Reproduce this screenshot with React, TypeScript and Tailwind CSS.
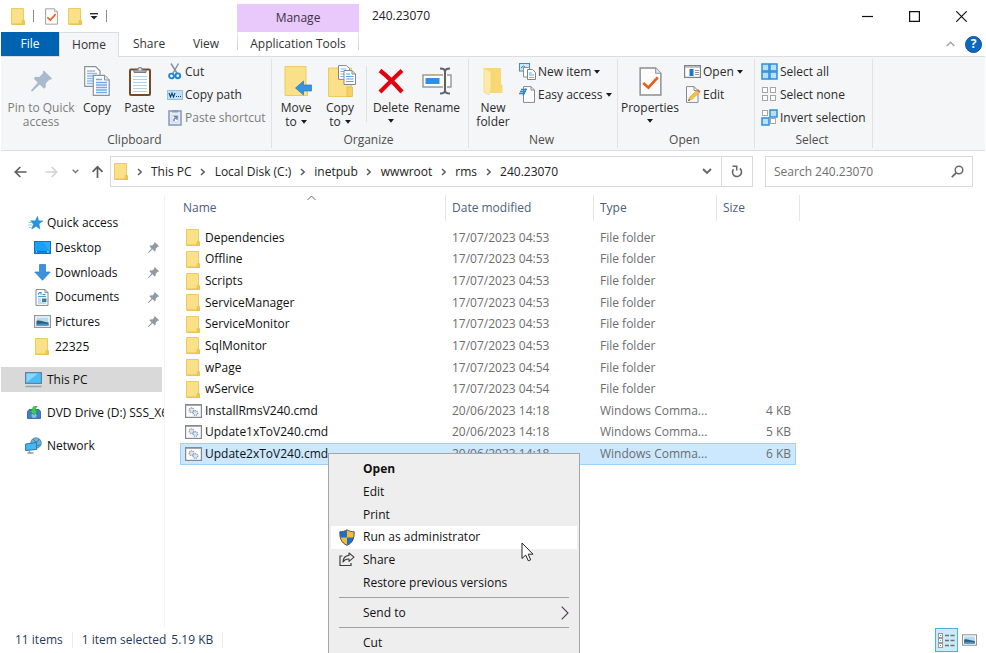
import React from "react";

type IconProps = { className?: string };

/* ---------- icons ---------- */

function FolderIcon({ className = "h-[17px] w-[14px]" }: IconProps) {
  return (
    <svg viewBox="0 0 14 17" className={`shrink-0 ${className}`} aria-hidden="true">
      <path d="M.5.5h12v12.3l1 .7v3H.5z" fill="#fbe08a" stroke="#eccb62" />
      <path d="M1 16h12.6" stroke="#e7bf4e" />
      <path d="M11 12.5h2.5v4H11z" fill="#f0c94f" stroke="#e6bd49" strokeWidth=".6" />
    </svg>
  );
}

function CheckPageIcon({ className = "h-[17px] w-[13px]" }: IconProps) {
  return (
    <svg viewBox="0 0 22 28" className={`shrink-0 ${className}`} aria-hidden="true">
      <path d="M1 1h15l5 5v21H1z" fill="#fcfcfd" stroke="#8d8f93" strokeWidth="1.4" />
      <path d="M16 1v5h5" fill="#e4e6ea" stroke="#8d8f93" />
      <path d="M4 15.5l5 4.5 9-10" fill="none" stroke="#ee5a1c" strokeWidth="2.6" />
    </svg>
  );
}

function PinShape({ className = "h-5 w-5 text-[#a9b9ce]" }: IconProps) {
  return (
    <svg viewBox="0 0 20 20" className={`shrink-0 ${className}`} aria-hidden="true">
      <path
        d="M12.2 0L20 7.6l-1.2 1.2-1.2-.2-3.6 3.8.1 3.4-1.8 1.6-4-4L1.2 20 0 19.6.3 18.6 6.400 11.600 2.600 7.700l1.700-1.700 3.500.2L11.500 2.600l-.400-1.300z"
        fill="currentColor"
      />
    </svg>
  );
}

function CopyIcon() {
  return (
    <svg viewBox="0 0 26 30" className="h-[30px] w-[26px]" aria-hidden="true">
      <path d="M.7.700h11l4.300 4.300v15.300H.7z" fill="#fff" stroke="#8b9098" strokeWidth="1.200" />
      <path d="M3 5h8M3 7.500h10M3 10h10M3 12.500h10M3 15h10M3 17.500h10" stroke="#8ebdf0" strokeWidth="1.300" />
      <path d="M9.300 9.300h11.200l4.700 4.700v15.300H9.300z" fill="#fff" stroke="#8b9098" strokeWidth="1.200" />
      <path d="M20.500 9.300V14h4.700" fill="#dfe5ee" stroke="#8b9098" />
      <path d="M12 13.500h6M12 16.500h11M12 19h11M12 21.500h11M12 24h11M12 26.500h11" stroke="#6eaaf0" strokeWidth="1.400" />
    </svg>
  );
}

function PasteIcon() {
  return (
    <svg viewBox="0 0 22 30" className="h-[30px] w-[22px]" aria-hidden="true">
      <rect x="1" y="3.500" width="20" height="25.500" rx="1" fill="#fff" stroke="#74492a" strokeWidth="2" />
      <path d="M4 10.500h14M4 13.500h14M4 16.500h14M4 19.500h14M4 22.500h14M4 25.500h14" stroke="#a9d3ee" strokeWidth="1.200" />
      <path d="M5 6.500V4h3.500a2.500 2.500 0 015 0H17v2.500z" fill="#a3a9b0" stroke="#777c83" />
      <circle cx="11" cy="3.200" r="1" fill="#f5f6f7" />
    </svg>
  );
}

function ScissorsIcon() {
  return (
    <svg viewBox="0 0 14 17" className="h-[17px] w-[14px]" aria-hidden="true">
      <path d="M3 .5L9.500 11M10.500.5L4.500 11" stroke="#8793a0" strokeWidth="1.500" />
      <circle cx="3.500" cy="13" r="2.400" fill="none" stroke="#1d86cc" strokeWidth="1.900" />
      <circle cx="9.800" cy="12.800" r="2.400" fill="none" stroke="#1d86cc" strokeWidth="1.900" />
    </svg>
  );
}

function CopyPathIcon() {
  return (
    <svg viewBox="0 0 16 10" className="h-[10px] w-4" aria-hidden="true">
      <rect x=".5" y=".5" width="15" height="9" fill="#bfe2f8" stroke="#8cc3e6" />
      <path d="M2 3l1.500 4L5 3l1.500 4L8 3" fill="none" stroke="#1b3f63" strokeWidth="1.100" />
      <path d="M9 6.500h1M11 6.500h1M13 6.500h1" stroke="#1b3f63" strokeWidth="1.200" />
    </svg>
  );
}

function PasteShortcutIcon() {
  return (
    <svg viewBox="0 0 14 17" className="h-[17px] w-[14px]" aria-hidden="true">
      <rect x="1" y="2" width="12" height="14" fill="#e5ebf5" stroke="#8b9dbd" strokeWidth="1.600" />
      <path d="M4 1h6v2.500H4z" fill="#8b9dbd" />
      <path d="M4 6.500h6v6.500H4z" fill="#fff" stroke="#b9c5da" strokeWidth=".7" />
      <path d="M5.500 12V10L8 8H6V7h3.500v3.500h-1V9L6.500 10.500V12z" fill="#6480b0" stroke="#6480b0" strokeWidth=".5" />
    </svg>
  );
}

function MoveToIcon() {
  return (
    <svg viewBox="0 0 28 30" className="ml-1 h-[30px] w-7" aria-hidden="true">
      <path d="M1 .5h21v21l1.500 1.500v6.500H1z" fill="#fbe08a" stroke="#edcb62" />
      <path d="M11.500 22l8-7v4h8v6h-8v4z" fill="#3793e0" stroke="#2678bd" strokeWidth=".7" />
    </svg>
  );
}

function CopyToIcon() {
  return (
    <svg viewBox="0 0 28 32" className="ml-1 h-8 w-7" aria-hidden="true">
      <path d="M.5 3h23v28.500H.5z" fill="#fbe08a" stroke="#edcb62" />
      <path d="M19 22h5.500v9.500H19z" fill="#f6d263" stroke="#e0b84a" strokeWidth=".7" />
      <path d="M10.500.6h8l3 3v10.800h-11z" fill="#fff" stroke="#7f8894" />
      <path d="M12.500 4h6M12.500 6.500h7M12.500 9h7M12.500 11.500h7" stroke="#7db2ee" />
      <path d="M16 5.500h8l3.500 3.500v10.500H16z" fill="#fff" stroke="#7f8894" />
      <path d="M24 5.500V9h3.500" fill="none" stroke="#7f8894" />
      <path d="M18 9h4M18 11.500h7.500M18 14h7.500M18 16.500h7.500" stroke="#5f9fec" strokeWidth="1.200" />
    </svg>
  );
}

function DeleteIcon() {
  return (
    <svg viewBox="0 0 26 26" className="h-[26px] w-[26px]" aria-hidden="true">
      <path d="M2 2.500C9 8 17 16 24 24M24 2.500C17 9 9 17 2 24" stroke="#e3000f" strokeWidth="4.200" fill="none" />
    </svg>
  );
}

function RenameIcon() {
  return (
    <svg viewBox="0 0 30 28" className="h-7 w-[30px]" aria-hidden="true">
      <rect x="1" y="8" width="28" height="12" fill="#fff" stroke="#8a8d90" strokeWidth="1.300" />
      <rect x="3.500" y="11" width="14" height="6" fill="#2f8fe4" />
      <path d="M23 3v22" stroke="#f5f6f7" strokeWidth="4" />
      <path d="M18 1.500c2.500 0 5 .5 5 3v19c0 2.500-2.500 3-5 3M28 1.500c-2.500 0-5 .5-5 3M28 26.500c-2.500 0-5-.5-5-3" stroke="#5f6266" strokeWidth="2" fill="none" />
    </svg>
  );
}

function NewFolderIcon() {
  return (
    <svg viewBox="0 0 20 29" className="h-[29px] w-5" aria-hidden="true">
      <path d="M1 1h17v16l1.500 1.500V26H1z" fill="#f8d775" />
      <path d="M1 1l7 4v17l-2 6-5-3z" fill="#fdeaa9" stroke="#f3d277" strokeWidth=".6" />
    </svg>
  );
}

function NewItemIcon() {
  return (
    <svg viewBox="0 0 17 17" className="h-[17px] w-[17px]" aria-hidden="true">
      <rect x=".5" y=".5" width="10" height="7.500" fill="#cfe8f9" stroke="#3a8cc4" />
      <path d="M2 5l2.500-2L7 5" stroke="#2673a8" fill="none" />
      <path d="M4.500 4.500h5l2.500 2.500v7H4.500z" fill="#fff" stroke="#8a9098" />
      <path d="M8.500 6.500h5l3 3v7h-8z" fill="#fff" stroke="#7c828a" />
      <path d="M10 10h3M10 12h5" stroke="#66a8e6" />
      <path d="M10 14.500h5" stroke="#e29a6d" />
    </svg>
  );
}

function EasyAccessIcon() {
  return (
    <svg viewBox="0 0 17 17" className="h-[17px] w-[17px]" aria-hidden="true">
      <path d="M4.500.6h7.500l3.500 3.500v12.300h-11z" fill="#fff" stroke="#858a91" />
      <path d="M12 .6v3.500h3.500" fill="none" stroke="#858a91" />
      <path d="M2 3.500h6M1 5.500h6M0 7.500h6" stroke="#2f88cc" strokeWidth="1.300" />
      <path d="M4 9.500l3-7" stroke="#2f88cc" strokeWidth="1.300" />
    </svg>
  );
}

function OpenIcon() {
  return (
    <svg viewBox="0 0 17 13" className="h-[13px] w-[17px]" aria-hidden="true">
      <rect x=".6" y=".6" width="15.800" height="11.800" fill="#fff" stroke="#7c8085" strokeWidth="1.200" />
      <path d="M1 2h15" stroke="#9fa4aa" strokeWidth="1.300" />
      <rect x="5.500" y="4" width="4" height="7" fill="#1e74d2" />
      <path d="M11 5.500h4M11 7.500h4M11 9.500h4" stroke="#8f959c" />
    </svg>
  );
}

function EditIcon() {
  return (
    <svg viewBox="0 0 16 17" className="h-[17px] w-4" aria-hidden="true">
      <path d="M1.500.6h7.500l4 4v11.800H1.500z" fill="#fdfdfd" stroke="#85898f" />
      <path d="M9 .6v4h4" fill="none" stroke="#85898f" />
      <path d="M3.500 14.500l1-3.200 7.500-7 2.400 2.400-7.700 6.700z" fill="#f5c242" stroke="#cf9b33" strokeWidth=".6" />
      <path d="M12 4.300l1.200-1.100 2.300 2.300-1.100 1.200z" fill="#d9636d" />
      <path d="M3.200 15l.7-2 1.300 1.300z" fill="#444" />
    </svg>
  );
}

function SelectGrid({ filled }: { filled: boolean[] }) {
  const spots = [
    [1, 1],
    [9, 1],
    [1, 9],
    [9, 9],
  ];
  return (
    <svg viewBox="0 0 17 17" className="h-[17px] w-[17px]" aria-hidden="true">
      {spots.map(([x, y], i) =>
        filled[i] ? (
          <rect key={i} x={x} y={y} width="7" height="7" fill="#b9e0fb" stroke="#2c8fdd" strokeWidth="1.500" />
        ) : (
          <rect key={i} x={x + 0.5} y={y + 0.5} width="5" height="5" fill="#fff" stroke="#a6a6a6" />
        )
      )}
    </svg>
  );
}

function StarIcon() {
  return (
    <svg viewBox="0 0 15 14" className="h-[14px] w-[15px]" aria-hidden="true">
      <path d="M9.500 .3l1 4.400 4.300.3-3.800 2.700.8 5.300-3.600-2.700-4.400 2.800 1.600-4.900L3 5l4.300-.2z" fill="#2a94dc" stroke="#1c7fc4" strokeWidth=".5" />
      <path d="M2 4.500h3M.5 6.500h3.500M0 9h4M1 11.500h2.500" stroke="#7cc0ec" strokeWidth=".8" />
    </svg>
  );
}

function DesktopIcon() {
  return (
    <svg viewBox="0 0 17 13" className="h-[13px] w-[17px]" aria-hidden="true">
      <rect x=".5" y=".5" width="16" height="12" fill="#18a0f5" stroke="#1372bd" />
      <path d="M1 10.800h15" stroke="#0e5e9c" />
      <path d="M2 10.800h1M13 10.800h2" stroke="#d5ecfa" />
      <path d="M16 1v9L9 1z" fill="#2aabfb" />
    </svg>
  );
}

function DownloadsIcon() {
  return (
    <svg viewBox="0 0 17 17" className="h-[17px] w-[17px]" aria-hidden="true">
      <path d="M5.500.5h6V8h4.700L8.500 16.300.8 8h4.700z" fill="#3d92df" stroke="#2b78c0" strokeWidth=".7" />
    </svg>
  );
}

function DocumentsIcon() {
  return (
    <svg viewBox="0 0 14 17" className="h-[17px] w-[14px]" aria-hidden="true">
      <path d="M1 .6h9l3 3v12.800H1z" fill="#fff" stroke="#858a90" />
      <path d="M10 .6v3h3" fill="none" stroke="#858a90" />
      <path d="M3 5.500l1.500-2h1.500v2M7.500 5.500h3" fill="none" stroke="#2f93dd" strokeWidth="1.200" />
      <path d="M3 7.500h8" stroke="#3fa6e6" strokeWidth="1.200" />
      <path d="M3 10h3M3 12h3M3 14h8" stroke="#7fb6dc" />
      <path d="M7 9.500h4.500V13H7z" fill="#3c7f9c" />
    </svg>
  );
}

function PictureIcon({ className = "h-[13px] w-[17px]" }: IconProps) {
  return (
    <svg viewBox="0 0 17 13" className={`shrink-0 ${className}`} aria-hidden="true">
      <rect x=".6" y=".6" width="15.800" height="11.800" fill="#fff" stroke="#92969a" strokeWidth="1.200" />
      <path d="M2.500 2.500h12v8h-12z" fill="#b3dbf4" />
      <path d="M2.500 6c3-1.500 6 1 12 1.500v3h-12z" fill="#2d5f7d" />
      <path d="M2.500 9c4-1 8-.5 12 0v1.500h-12z" fill="#4a8fc7" />
    </svg>
  );
}

function ComputerIcon() {
  return (
    <svg viewBox="0 0 17 16" className="h-4 w-[17px]" aria-hidden="true">
      <rect x=".6" y=".6" width="15.800" height="10.800" fill="#4bbcf5" stroke="#5b7f99" strokeWidth="1.100" />
      <path d="M1.500 10.500V1.500H13z" fill="#8ad7fb" />
      <path d="M.5 14.500h16" stroke="#8fa6b8" strokeWidth="1.600" />
    </svg>
  );
}

function DvdIcon() {
  return (
    <svg viewBox="0 0 14 14" className="h-[14px] w-[14px]" aria-hidden="true">
      <path d="M.5 5.500l1.500-2h10l1.500 2v7H.5z" fill="#3c7fc4" stroke="#2d5d92" strokeWidth=".8" />
      <circle cx="7" cy="9.500" r="2.500" fill="#8db9e2" />
      <path d="M10.500 0C6 0 5 2 5 4.500H2.800L6.800 9l4-4.500H8.500C8.500 2.500 9 1 10.500 0z" fill="#3ccf4e" stroke="#1d9a34" strokeWidth=".5" />
    </svg>
  );
}

function NetworkIcon() {
  return (
    <svg viewBox="0 0 17 17" className="h-[17px] w-[17px]" aria-hidden="true">
      <circle cx="11" cy="6" r="5.300" fill="#6fb2da" stroke="#44799d" strokeWidth=".7" />
      <path d="M8 2c2 1 1 3 3 3s3-2 3-3M11 11c0-2 2-3 5-3" stroke="#3d7ca5" fill="none" />
      <path d="M.6 7l11-1.500v7L.6 13.500z" fill="#46b9f2" stroke="#39769c" />
      <path d="M4.500 13.500v2M2.500 16h6" stroke="#8797a3" strokeWidth="1.300" />
    </svg>
  );
}

function CmdFileIcon() {
  return (
    <svg viewBox="0 0 17 14" className="h-[14px] w-[17px] shrink-0" aria-hidden="true">
      <rect x=".6" y=".6" width="15.800" height="12.800" fill="#fdfdfe" stroke="#85898f" strokeWidth="1.200" />
      <path d="M1 1.400h15" stroke="#9ba0a7" />
      <circle cx="6.500" cy="6.200" r="2.300" fill="#dfe3e8" stroke="#959ca6" strokeWidth="1.300" strokeDasharray="1.200 .6" />
      <circle cx="10.500" cy="9" r="2.300" fill="#d8e8f4" stroke="#84a7c2" strokeWidth="1.300" strokeDasharray="1.200 .6" />
    </svg>
  );
}

function ShieldIcon() {
  return (
    <svg viewBox="0 0 16 17" className="h-[17px] w-4" aria-hidden="true">
      <path d="M8 1c2 1.300 4.500 2 7 2 0 6-1 10.500-7 13.200z" fill="#fbbc2c" />
      <path d="M8 1C6 2.300 3.500 3 1 3c0 6 1 10.500 7 13.200z" fill="#1b6fd0" />
      <path d="M1.200 8.500H8v7.500c-4.500-2-6.400-4.700-6.800-7.500z" fill="#fbbc2c" />
      <path d="M14.800 8.500H8v7.500c4.500-2 6.400-4.700 6.800-7.500z" fill="#1b6fd0" />
      <path d="M8 .8c2 1.300 4.500 2 7.200 2C15.200 9 14 13.700 8 16.400 2 13.700.8 9 .8 2.800 3.500 2.800 6 2.100 8 .8z" fill="none" stroke="#4b4f55" />
    </svg>
  );
}

function ShareIcon() {
  return (
    <svg viewBox="0 0 16 15" className="h-[15px] w-4" aria-hidden="true">
      <path d="M3.500 4H1v9.500h11V11" fill="none" stroke="#3d3d3d" strokeWidth="1.200" />
      <path d="M10 1l5 4.200-5 4.200V7C7 6.800 5.200 8 4 10c.2-4 2.500-6.300 6-6.600z" fill="none" stroke="#3d3d3d" strokeWidth="1.100" strokeLinejoin="round" />
    </svg>
  );
}

function DetailsViewIcon() {
  return (
    <svg viewBox="0 0 17 15" className="h-[15px] w-[17px]" aria-hidden="true">
      {[0, 5, 10].map((y) => (
        <g key={y}>
          <rect x=".5" y={y + 0.5} width="4" height="4" fill="#fff" stroke="#9a9a9a" />
          <path d={`M7 ${y + 2.5}h4M12.500 ${y + 2.5}h4`} stroke="#6b7278" strokeWidth="1.300" />
        </g>
      ))}
      <path d="M2 2.500h1" stroke="#5d8bbf" />
      <path d="M2 7.500h1" stroke="#5fa9e2" />
      <path d="M2 12.500h1" stroke="#e0523d" />
    </svg>
  );
}

function Chevron({ className = "h-2 w-[6px] text-[#5c5c5c]" }: IconProps) {
  return (
    <svg viewBox="0 0 6 8" className={`shrink-0 ${className}`} aria-hidden="true">
      <path d="M1 1l3.200 3L1 7" fill="none" stroke="currentColor" strokeWidth="1.500" />
    </svg>
  );
}

function DropArrow({ className = "block" }: IconProps) {
  return (
    <svg viewBox="0 0 6 4" className={`h-1 w-[6px] shrink-0 ${className}`} aria-hidden="true">
      <path d="M0 0h6L3 3.800z" fill="#1b1b1b" />
    </svg>
  );
}

/* ---------- ribbon ---------- */

function BigButton({
  icon,
  label,
  arrow,
  width,
  disabled,
}: {
  icon: React.ReactNode;
  label: string;
  arrow?: "inline" | "below";
  width: string;
  disabled?: boolean;
}) {
  return (
    <button type="button" disabled={disabled} className={`flex flex-col items-center pt-[5px] leading-[14px] disabled:text-[#7d7d7d] ${width}`}>
      <span className="flex h-9 items-center justify-center pb-1">{icon}</span>
      <span className="whitespace-pre-line">
        {label}
        {arrow === "inline" && <DropArrow className="mb-[2px] ml-1 inline-block" />}
      </span>
      {arrow === "below" && (
        <span className="flex h-3 items-center">
          <DropArrow />
        </span>
      )}
    </button>
  );
}

function SmallButton({ icon, label, arrow, disabled }: { icon: React.ReactNode; label: string; arrow?: boolean; disabled?: boolean }) {
  return (
    <button type="button" disabled={disabled} className="flex h-[23px] items-center gap-[2px] whitespace-nowrap disabled:text-[#7d7d7d]">
      <span className="flex w-[17px] justify-center">{icon}</span>
      <span>{label}</span>
      {arrow && <DropArrow className="ml-px block" />}
    </button>
  );
}

function Group({ title, width, children }: { title: string; width: string; children: React.ReactNode }) {
  return (
    <section aria-label={title} className={`my-[2px] flex shrink-0 flex-col border-r border-[#e1e2e4] pt-px ${width}`}>
      <div className="flex h-[73px]">{children}</div>
      <h2 className="pr-[3px] text-center leading-[17px] text-[#4d4d4d]">{title}</h2>
    </section>
  );
}

function Ribbon() {
  return (
    <div className="flex h-[94px] border-b border-[#dcdddf] bg-[#f5f6f7] text-[#2b2b2b]">
      <Group title="Clipboard" width="w-[271px]">
        <BigButton width="w-20" disabled icon={<PinShape className="h-[22px] w-[21px] text-[#a9b9ce]" />} label={"Pin to Quick\naccess"} />
        <BigButton width="w-8" icon={<CopyIcon />} label="Copy" />
        <BigButton width="w-[53px]" icon={<PasteIcon />} label="Paste" />
        <div>
          <SmallButton icon={<ScissorsIcon />} label="Cut" />
          <SmallButton icon={<CopyPathIcon />} label="Copy path" />
          <SmallButton disabled icon={<PasteShortcutIcon />} label="Paste shortcut" />
        </div>
      </Group>
      <Group title="Organize" width="w-[197px]">
        <BigButton width="w-12" arrow="inline" icon={<MoveToIcon />} label={"Move\nto"} />
        <BigButton width="w-10" arrow="inline" icon={<CopyToIcon />} label={"Copy\nto"} />
        <div className="mt-[6px] ml-[6px] h-14 w-px bg-[#dfe0e2]" />
        <BigButton width="w-12" arrow="below" icon={<DeleteIcon />} label="Delete" />
        <BigButton width="w-11" icon={<RenameIcon />} label="Rename" />
      </Group>
      <Group title="New" width="w-[149px]">
        <BigButton width="w-12" icon={<NewFolderIcon />} label={"New\nfolder"} />
        <div className="pl-[2px]">
          <SmallButton arrow icon={<NewItemIcon />} label="New item" />
          <SmallButton arrow icon={<EasyAccessIcon />} label="Easy access" />
        </div>
      </Group>
      <Group title="Open" width="w-[137px]">
        <BigButton width="w-16" arrow="below" icon={<CheckPageIcon className="h-[29px] w-[23px]" />} label="Properties" />
        <div className="pl-[2px]">
          <SmallButton arrow icon={<OpenIcon />} label="Open" />
          <SmallButton icon={<EditIcon />} label="Edit" />
        </div>
      </Group>
      <Group title="Select" width="w-[118px]">
        <div className="pl-[6px]">
          <SmallButton icon={<SelectGrid filled={[true, true, true, true]} />} label="Select all" />
          <SmallButton icon={<SelectGrid filled={[false, false, false, false]} />} label="Select none" />
          <SmallButton icon={<SelectGrid filled={[false, true, true, false]} />} label="Invert selection" />
        </div>
      </Group>
    </div>
  );
}

/* ---------- title bar and tabs ---------- */

function TitleBar() {
  return (
    <header className="flex h-8">
      <div className="flex w-[236px] items-center pl-[10px]">
        <FolderIcon />
        <span className="ml-2 h-3 w-px bg-[#8c8c8c]" />
        <button type="button" aria-label="Properties" className="ml-[11px]">
          <CheckPageIcon />
        </button>
        <button type="button" aria-label="New folder" className="ml-[10px]">
          <FolderIcon />
        </button>
        <button type="button" aria-label="Customize toolbar" className="ml-2">
          <svg viewBox="0 0 8 7" className="h-[7px] w-2" aria-hidden="true">
            <path d="M0 .7h8" stroke="#222" strokeWidth="1.300" />
            <path d="M.5 3h7L4 6.500z" fill="#222" />
          </svg>
        </button>
        <span className="ml-2 h-3 w-px bg-[#8c8c8c]" />
      </div>
      <div className="mt-1 flex w-[122px] items-center justify-center bg-[#e9c8fb] text-[#3d3346]">Manage</div>
      <h1 className="flex-1 self-center pl-[13px] text-[#222]">240.23070</h1>
      <button type="button" aria-label="Minimize" className="flex w-[47px] items-center justify-center">
        <svg viewBox="0 0 11 11" className="h-[11px] w-[11px]" aria-hidden="true">
          <path d="M0 5.500h11" stroke="#111" strokeWidth="1.200" />
        </svg>
      </button>
      <button type="button" aria-label="Maximize" className="flex w-[47px] items-center justify-center">
        <svg viewBox="0 0 11 11" className="h-[11px] w-[11px]" aria-hidden="true">
          <path d="M.6.600h9.800v9.800H.6z" fill="none" stroke="#111" strokeWidth="1.200" />
        </svg>
      </button>
      <button type="button" aria-label="Close" className="flex w-[47px] items-center justify-center">
        <svg viewBox="0 0 11 11" className="h-[11px] w-[11px]" aria-hidden="true">
          <path d="M.3.300l10.400 10.400M10.700.300L.3 10.700" stroke="#111" strokeWidth="1.200" />
        </svg>
      </button>
    </header>
  );
}

function TabRow() {
  return (
    <nav aria-label="Ribbon tabs" className="flex h-[25px] text-[#333]">
      <button type="button" className="w-[58px] border-b border-[#dcdddf] bg-[#0063b1] text-white">
        File
      </button>
      <button type="button" className="w-[60px] border-x border-t border-[#dcdddf] bg-[#f5f6f7] pb-px">
        Home
      </button>
      <button type="button" className="w-[60px] border-b border-[#dcdddf]">
        Share
      </button>
      <button type="button" className="w-[58px] border-b border-[#dcdddf] pr-1">
        View
      </button>
      <div className="flex w-[122px] border-b border-[#dcdddf]">
        <span className="h-[18px] w-px bg-gradient-to-b from-[#ececec] to-[#cfcfcf]" />
        <button type="button" className="flex-1 whitespace-nowrap">
          Application Tools
        </button>
        <span className="h-[18px] w-px bg-gradient-to-b from-[#ececec] to-[#cfcfcf]" />
      </div>
      <div className="flex flex-1 items-center justify-end gap-[10px] border-b border-[#dcdddf] pr-[3px]">
        <button type="button" aria-label="Collapse ribbon">
          <svg viewBox="0 0 9 6" className="h-[6px] w-[9px]" aria-hidden="true">
            <path d="M.7 5l3.800-3.800L8.300 5" fill="none" stroke="#a3a3a3" strokeWidth="1.500" />
          </svg>
        </button>
        <button type="button" aria-label="Help" className="flex h-[17px] w-[17px] items-center justify-center rounded-full border border-[#0a4f96] bg-[#0d68c4] font-bold text-white">
          ?
        </button>
      </div>
    </nav>
  );
}

/* ---------- address bar ---------- */

const crumbs = ["This PC", "Local Disk (C:)", "inetpub", "wwwroot", "rms", "240.23070"];

function ArrowIcon({ className = "" }: IconProps) {
  return (
    <svg viewBox="0 0 13 12" className={`h-3 w-[13px] ${className}`} aria-hidden="true">
      <path d="M12.500 6H1.500M6.300 1L1.300 6l5 5" fill="none" stroke="currentColor" strokeWidth="1.700" />
    </svg>
  );
}

function DownChevron({ className = "" }: IconProps) {
  return (
    <svg viewBox="0 0 10 7" className={className} aria-hidden="true">
      <path d="M1 1l4 4 4-4" fill="none" stroke="currentColor" strokeWidth="1.900" />
    </svg>
  );
}

function AddressRow() {
  return (
    <div className="flex items-center pt-[5px] pr-3 pb-[7px] pl-[13px] text-[#222]">
      <button type="button" aria-label="Back" className="text-[#5e5e5e]">
        <ArrowIcon />
      </button>
      <button type="button" aria-label="Forward" disabled className="ml-[18px] text-[#d3d3d3]">
        <ArrowIcon className="rotate-180" />
      </button>
      <button type="button" aria-label="Recent locations" className="ml-[14px] text-[#777]">
        <DownChevron className="h-[5px] w-[7px]" />
      </button>
      <button type="button" aria-label="Up" className="ml-3 text-[#5e5e5e]">
        <ArrowIcon className="rotate-90" />
      </button>
      <div className="ml-[6px] flex h-[31px] flex-1 border border-[#d9d9d9]">
        <ol className="flex flex-1 items-center pl-[3px]">
          <li>
            <FolderIcon />
          </li>
          {crumbs.map((crumb) => (
            <li key={crumb} className="flex items-center whitespace-nowrap">
              <span className="flex w-[23px] justify-center">
                <Chevron />
              </span>
              <a href="#">{crumb}</a>
            </li>
          ))}
        </ol>
        <button type="button" aria-label="Previous locations" className="px-[9px] text-[#666]">
          <DownChevron className="h-[7px] w-[10px]" />
        </button>
        <button type="button" aria-label="Refresh" className="flex w-[31px] items-center justify-center border-l border-[#d9d9d9]">
          <svg viewBox="0 0 12 13" className="h-[13px] w-3" aria-hidden="true">
            <path d="M8.800 3.500A4.500 4.500 0 112.500 4.200" fill="none" stroke="#666" strokeWidth="1.600" />
            <path d="M1.500 1.200h4.200v4.300" fill="none" stroke="#666" strokeWidth="1.500" />
          </svg>
        </button>
      </div>
      <div className="ml-3 flex h-[31px] w-[208px] items-center border border-[#d9d9d9] pr-2 pl-2">
        <input type="search" aria-label="Search 240.23070" placeholder="Search 240.23070" className="min-w-0 flex-1 outline-none placeholder:text-[#6f6f6f]" />
        <svg viewBox="0 0 13 13" className="h-[13px] w-[13px]" aria-hidden="true">
          <circle cx="8" cy="5" r="3.800" fill="none" stroke="#6a6a6a" strokeWidth="1.500" />
          <path d="M5.200 7.800L.8 12.200" stroke="#6a6a6a" strokeWidth="1.900" />
        </svg>
      </div>
    </div>
  );
}

/* ---------- navigation pane ---------- */

const pinned = [
  { name: "Desktop", icon: <DesktopIcon />, pin: true },
  { name: "Downloads", icon: <DownloadsIcon />, pin: true },
  { name: "Documents", icon: <DocumentsIcon />, pin: true },
  { name: "Pictures", icon: <PictureIcon />, pin: true },
  { name: "22325", icon: <FolderIcon />, pin: false },
];

function NavPane() {
  return (
    <nav aria-label="Folders" className="mt-px w-[164px] shrink-0 overflow-hidden border-r border-[#f3f3f3] pt-4 pr-[2px] whitespace-nowrap text-[#111]">
      <ul className="grid h-[148px] grid-rows-6">
        <li className="flex items-center gap-1 pl-[27px]">
          <StarIcon />
          <a href="#">Quick access</a>
        </li>
        {pinned.map((item) => (
          <li key={item.name} className="flex items-center gap-1 pr-[3px] pl-8">
            <span className="flex w-[18px] justify-center">{item.icon}</span>
            <a href="#" className="flex-1">
              {item.name}
            </a>
            {item.pin && <PinShape className="h-[11px] w-[11px] text-[#909aa3]" />}
          </li>
        ))}
      </ul>
      <ul className="flex flex-col gap-2 pt-2">
        <li className="flex h-[25px] items-center gap-[5px] bg-[#d9d9d9] pl-6">
          <ComputerIcon />
          <a href="#">This PC</a>
        </li>
        <li className="flex h-[25px] items-center gap-[5px] pl-6">
          <span className="flex w-[17px] shrink-0 justify-center">
            <DvdIcon />
          </span>
          <a href="#">DVD Drive (D:) SSS_X6</a>
        </li>
        <li className="flex h-[25px] items-center gap-[5px] pl-6">
          <NetworkIcon />
          <a href="#">Network</a>
        </li>
      </ul>
    </nav>
  );
}

/* ---------- file list ---------- */

type Entry = { name: string; date: string; size?: string; selected?: boolean };

const entries: Entry[] = [
  { name: "Dependencies", date: "17/07/2023 04:53" },
  { name: "Offline", date: "17/07/2023 04:53" },
  { name: "Scripts", date: "17/07/2023 04:53" },
  { name: "ServiceManager", date: "17/07/2023 04:53" },
  { name: "ServiceMonitor", date: "17/07/2023 04:53" },
  { name: "SqlMonitor", date: "17/07/2023 04:53" },
  { name: "wPage", date: "17/07/2023 04:54" },
  { name: "wService", date: "17/07/2023 04:54" },
  { name: "InstallRmsV240.cmd", date: "20/06/2023 14:18", size: "4 KB" },
  { name: "Update1xToV240.cmd", date: "20/06/2023 14:18", size: "5 KB" },
  { name: "Update2xToV240.cmd", date: "20/06/2023 14:18", size: "6 KB", selected: true },
];

function FileTable() {
  const head = "h-[26px] border-r border-[#e5e5e5] p-0 text-left font-normal";
  return (
    <table className="mt-px ml-[15px] h-[270px] w-[620px] table-fixed border-separate border-spacing-0 self-start leading-5 text-[#6d6d6d]">
      <colgroup>
        <col className="w-[266px]" />
        <col className="w-[148px]" />
        <col className="w-[123px]" />
        <col className="w-[79px]" />
        <col className="w-1" />
      </colgroup>
      <thead className="text-[#4c607a]">
        <tr className="h-[26px]">
          <th className={`${head} relative pl-[3px]`}>
            Name
            <svg viewBox="0 0 9 6" className="absolute top-0 left-[127px] h-[6px] w-[9px]" aria-hidden="true">
              <path d="M.5 5l4-4 4 4" fill="none" stroke="#6e6e6e" />
            </svg>
          </th>
          <th className={`${head} pl-[6px]`}>Date modified</th>
          <th className={`${head} pl-[6px]`}>Type</th>
          <th className={`${head} pl-[6px]`} colSpan={2}>
            Size
          </th>
        </tr>
        <tr className="h-[6px]" aria-hidden="true">
          <td colSpan={5} className="h-[6px] p-0" />
        </tr>
      </thead>
      <tbody>
        {entries.map((e) => {
          const cell = e.selected ? "border-y border-[#99d1ff] bg-[#cce8ff] p-0 leading-[18px]" : "p-0";
          return (
            <tr key={e.name}>
              <td className={e.selected ? `${cell} border-l` : `${cell} pl-px`}>
                <div className="flex items-center gap-[3px] pl-[3px] text-[#111]">
                  <span className="flex w-[18px] justify-center">{e.size ? <CmdFileIcon /> : <FolderIcon />}</span>
                  {e.name}
                </div>
              </td>
              <td className={`${cell} pl-[6px]`}>{e.date}</td>
              <td className={`${cell} pl-[6px]`}>{e.size ? "Windows Comma..." : "File folder"}</td>
              <td className={e.selected ? `${cell} border-r pr-1 text-right` : `${cell} pr-[5px] text-right`}>{e.size}</td>
              <td className="p-0" />
            </tr>
          );
        })}
      </tbody>
    </table>
  );
}

/* ---------- context menu ---------- */

function MenuItem({ label, icon, bold, active, submenu }: { label: string; icon?: React.ReactNode; bold?: boolean; active?: boolean; submenu?: boolean }) {
  return (
    <li role="none" className="flex min-h-[22px]">
      <button type="button" role="menuitem" className={`flex flex-1 items-center pr-2 text-left ${active ? "bg-white" : ""} ${bold ? "font-bold" : ""}`}>
        <span className="flex w-8 justify-center">{icon}</span>
        <span className="flex-1">{label}</span>
        {submenu && (
          <svg viewBox="0 0 8 14" className="h-[14px] w-2" aria-hidden="true">
            <path d="M.7.700L7 7 .7 13.300" fill="none" stroke="#4a3f4d" strokeWidth="1.100" />
          </svg>
        )}
      </button>
    </li>
  );
}

function ContextMenu() {
  return (
    <div role="menu" aria-label="File actions" className="absolute top-[453px] left-[328px] w-[252px] border border-[#a6a6a6] bg-[#eeeeee] px-[2px] pt-1 pb-1 text-[#111]">
      <ul role="none" className="grid h-[136px] grid-rows-6">
        <MenuItem label="Open" bold />
        <MenuItem label="Edit" />
        <MenuItem label="Print" />
        <MenuItem label="Run as administrator" icon={<ShieldIcon />} active />
        <MenuItem label="Share" icon={<ShareIcon />} />
        <MenuItem label="Restore previous versions" />
      </ul>
      <div role="separator" className="mx-2 mt-[3px] mb-1 h-px bg-[#a0a0a0]" />
      <ul role="none">
        <MenuItem label="Send to" submenu />
      </ul>
      <div role="separator" className="mx-2 mt-[3px] mb-1 h-px bg-[#a0a0a0]" />
      <ul role="none">
        <MenuItem label="Cut" />
      </ul>
      <svg viewBox="0 0 13 20" className="absolute top-[88px] left-[192px] h-5 w-[13px]" aria-hidden="true">
        <path d="M1 1v15.500l3.700-3.400 2.600 5.700 2.400-1-2.500-5.600H12z" fill="#fff" stroke="#222" />
      </svg>
    </div>
  );
}

/* ---------- status bar ---------- */

function StatusBar() {
  return (
    <footer className="flex h-[26px] items-center pr-2 pl-[14px] text-[#1f3a5c]">
      <span>11 items</span>
      <span className="ml-[9px] h-4 w-px bg-[#ececec]" />
      <span className="ml-[9px]">1 item selected</span>
      <span className="ml-[5px]">5.19 KB</span>
      <span className="ml-[9px] h-4 w-px bg-[#ececec]" />
      <div className="ml-auto flex items-center gap-1">
        <button type="button" aria-label="Details view" className="flex h-6 w-[23px] items-center justify-center border border-[#4db1dc] bg-[#cdeaf7]">
          <DetailsViewIcon />
        </button>
        <button type="button" aria-label="Large icons view">
          <PictureIcon className="h-3 w-[15px]" />
        </button>
      </div>
    </footer>
  );
}

export default function App() {
  return (
    <div className="relative flex h-screen flex-col overflow-hidden bg-white px-px font-['Open_Sans','Noto_Sans',sans-serif] text-[12px] leading-4">
      <TitleBar />
      <TabRow />
      <Ribbon />
      <AddressRow />
      <main className="flex flex-1">
        <NavPane />
        <FileTable />
      </main>
      <StatusBar />
      <ContextMenu />
    </div>
  );
}
